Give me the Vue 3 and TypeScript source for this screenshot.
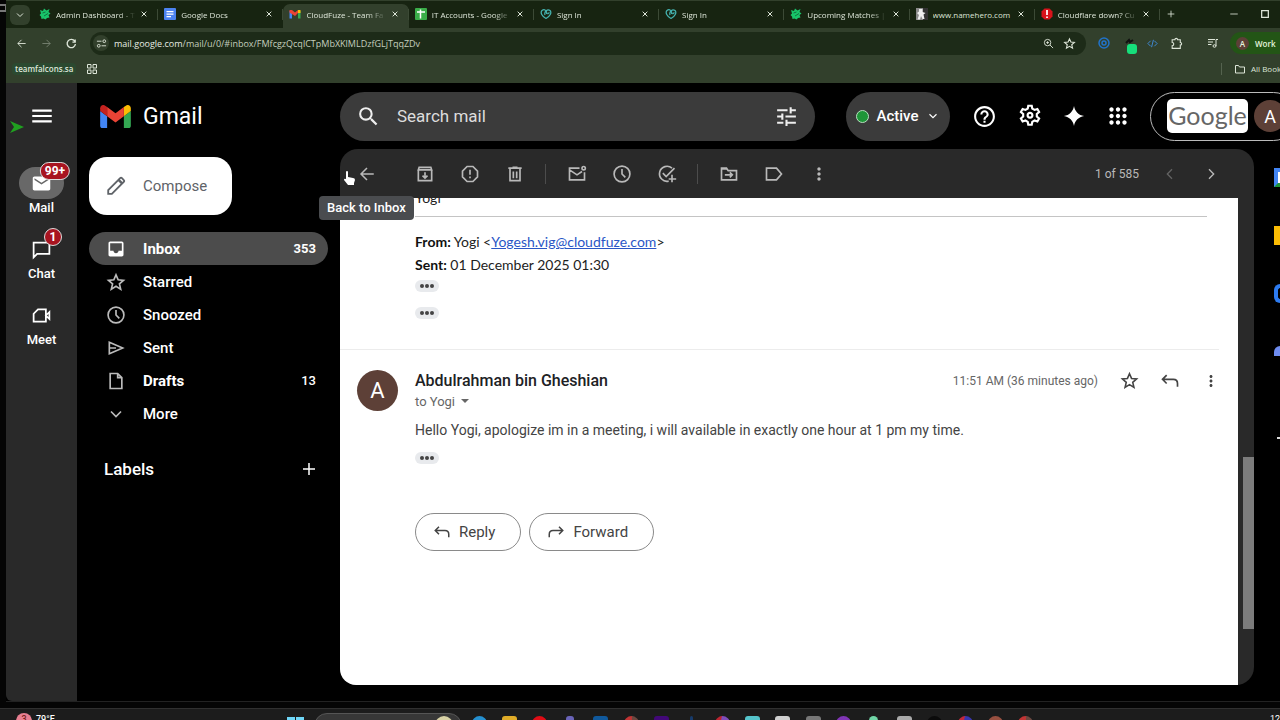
<script setup lang="ts">
import { h, ref } from 'vue'

interface Glyph { d: string; line?: number; box?: number }

const glyphs: Record<string, Glyph> = {
  chevron: { d: 'M6 9l6 6 6-6', line: 2 },
  prev: { d: 'M15 5l-7 7 7 7', line: 2 },
  next: { d: 'M9 5l7 7-7 7', line: 2 },
  close: { d: 'M5 5l14 14M19 5L5 19', line: 3 },
  plus: { d: 'M12 4v16M4 12h16', line: 2 },
  minus: { d: 'M3 12h18', line: 2 },
  square: { d: 'M4 4h16v16H4z', line: 3 },
  back: { d: 'M21 12H4M12 4l-8 8 8 8', line: 2 },
  forward: { d: 'M3 12h17M12 4l8 8-8 8', line: 2 },
  reload: { d: 'M19 7a9 9 0 1 0 1.5 6M20 3v6h-6', line: 3 },
  site: { d: 'M2 7h10M22 17H12M15 7a3 3 0 1 0 6 0 3 3 0 1 0-6 0M3 17a3 3 0 1 0 6 0 3 3 0 1 0-6 0', line: 2 },
  grid: { d: 'M3 3h7v7H3zM14 3h7v7h-7zM3 14h7v7H3zM14 14h7v7h-7z', line: 2 },
  zoomIn: { d: 'M3 10a7 7 0 1 0 14 0 7 7 0 1 0-14 0M15 15l7 7M10 7v6M7 10h6', line: 2 },
  star: { d: 'M12 3.500l2.600 5.900 6.400.600-4.900 4.300 1.500 6.300-5.600-3.400-5.600 3.400 1.500-6.300L3 10l6.400-.600z', line: 2 },
  puzzle: { d: 'M4 5h5a2.500 2.500 0 0 1 5 0h5v5a2.500 2.500 0 0 1 0 5v6H4v-5a3 3 0 0 0 0-6z', line: 2 },
  queue: { d: 'M2 5h14M2 10h10M2 15h7M18 18V5h4M12 18a3 2.500 0 1 0 6 0 3 2.500 0 1 0-6 0', line: 2 },
  folder: { d: 'M3 5h6l2 3h10v12H3z', line: 2 },
  menu: { d: 'M3 18h18v-2H3v2zm0-5h18v-2H3v2zm0-7v2h18V6H3z' },
  search: { d: 'M15.500 14h-.790l-.280-.270A6.471 6.471 0 0 0 16 9.500 6.500 6.500 0 1 0 9.500 16c1.610 0 3.090-.590 4.230-1.570l.270.280v.790l5 4.990L20.490 19l-4.990-5zm-6 0C7.010 14 5 11.990 5 9.500S7.010 5 9.500 5 14 7.010 14 9.500 11.990 14 9.500 14z' },
  tune: { d: 'M3 17v2h6v-2H3zM3 5v2h10V5H3zm10 16v-2h8v-2h-8v-2h-2v6h2zM7 9v2H3v2h4v2h2V9H7zm14 4v-2H11v2h10zm-6-4h2V7h4V5h-4V3h-2v6z' },
  help: { d: 'M11 18h2v-2h-2v2zm1-16C6.480 2 2 6.480 2 12s4.480 10 10 10 10-4.480 10-10S17.520 2 12 2zm0 18c-4.410 0-8-3.590-8-8s3.590-8 8-8 8 3.590 8 8-3.590 8-8 8zm0-14c-2.210 0-4 1.790-4 4h2c0-1.100.9-2 2-2s2 .9 2 2c0 2-3 1.750-3 5h2c0-2.250 3-2.500 3-5 0-2.210-1.790-4-4-4z' },
  gear: { d: 'M10.400 2.500h3.200l.5 2.700 2.100 1.200 2.600-.9 1.600 2.800-2.100 1.800v2.400l2.100 1.800-1.600 2.800-2.600-.9-2.100 1.200-.5 2.700h-3.200l-.5-2.700-2.100-1.200-2.600.9-1.600-2.800 2.100-1.800v-2.400L3.600 8.300l1.600-2.800 2.600.9 2.100-1.200zM9.800 11.300a2.200 2.200 0 1 0 4.400 0 2.200 2.200 0 1 0-4.400 0', line: 2 },
  spark: { d: 'M12 1c1 6 5 10 11 11-6 1-10 5-11 11-1-6-5-10-11-11 6-1 10-5 11-11z' },
  apps: { d: 'M6 8c1.100 0 2-.9 2-2s-.9-2-2-2-2 .9-2 2 .9 2 2 2zm6 12c1.100 0 2-.9 2-2s-.9-2-2-2-2 .9-2 2 .9 2 2 2zm-6 0c1.100 0 2-.9 2-2s-.9-2-2-2-2 .9-2 2 .9 2 2 2zm0-6c1.100 0 2-.9 2-2s-.9-2-2-2-2 .9-2 2 .9 2 2 2zm6 0c1.100 0 2-.9 2-2s-.9-2-2-2-2 .9-2 2 .9 2 2 2zm4-8c0 1.100.9 2 2 2s2-.9 2-2-.9-2-2-2-2 .9-2 2zm-4 2c1.100 0 2-.9 2-2s-.9-2-2-2-2 .9-2 2 .9 2 2 2zm6 6c1.100 0 2-.9 2-2s-.9-2-2-2-2 .9-2 2 .9 2 2 2zm0 6c1.100 0 2-.9 2-2s-.9-2-2-2-2 .9-2 2 .9 2 2 2z' },
  archive: { d: 'M4 7v13h16V7M4 7l1-3h14l1 3zM12 10v7M9 14l3 3 3-3', line: 2 },
  spam: { d: 'M8.500 3h7L21 8.500v7L15.500 21h-7L3 15.500v-7zM12 7v6M12 15v2', line: 2 },
  trash: { d: 'M6 6v14h12V6M4 5h16M9 4h6M10 9v8M14 9v8', line: 2 },
  unread: { d: 'M15 5H3v14h18V10M3 7l9 6 6-4M18 5a2 2 0 1 0 4 0 2 2 0 1 0-4 0', line: 2 },
  clock: { d: 'M2.500 12a9.500 9.500 0 1 0 19 0 9.500 9.500 0 1 0-19 0M12 6v6l4 4', line: 2 },
  task: { d: 'M18 5a9 9 0 1 0-4 15.500M7 11l4 4L21 5M18 13v9M14 18h9', line: 2 },
  moveTo: { d: 'M3 5h6l2 3h10v11H3zM3 6h7M7 13h9M13 10l3 3-3 3', line: 2 },
  label: { d: 'M3 5h12l6 7-6 7H3z', line: 2 },
  more: { d: 'M12 8c1.100 0 2-.9 2-2s-.9-2-2-2-2 .9-2 2 .9 2 2 2zm0 2c-1.100 0-2 .9-2 2s.9 2 2 2 2-.9 2-2-.9-2-2-2zm0 6c-1.100 0-2 .9-2 2s.9 2 2 2 2-.9 2-2-.9-2-2-2z' },
  reply: { d: 'M8 5l-5 5 5 5M3 10h13q5 0 5 5v4', line: 2 },
  send: { d: 'M16 5l5 5-5 5M21 10H8q-5 0-5 5v4', line: 2 },
  pencil: { d: 'M3.500 20.500v-4L15 5l4 4L7.500 20.500zM14.500 5.500l2-2q1-1 2 0l2 2q1 1 0 2l-2 2z', line: 2 },
  mail: { d: 'M20 4H4c-1.100 0-2 .9-2 2v12c0 1.100.9 2 2 2h16c1.100 0 2-.9 2-2V6c0-1.100-.9-2-2-2zm0 4l-8 5-8-5V6l8 5 8-5v2z' },
  chat: { d: 'M3 21V4h18v13H7z', line: 2 },
  meet: { d: 'M8 5h9v14H3V10zM17 12l4-4v8z', line: 2 },
  inbox: { d: 'M19 3H5c-1.100 0-2 .9-2 2v14c0 1.100.9 2 2 2h14c1.100 0 2-.9 2-2V5c0-1.100-.9-2-2-2zm0 11h-4c0 1.660-1.350 3-3 3s-3-1.340-3-3H5V5h14z' },
  sent: { d: 'M4 5l16 7-16 7zM4 12h8', line: 2 },
  draft: { d: 'M5 3h9l5 5v13H5zM14 3v5h5', line: 2 },
  caret: { d: 'M4 8h16l-8 8z' },
  code: { d: 'M8 6l-6 6 6 6M16 6l6 6-6 6M14 4l-4 16', line: 2 },
}

const Icon = (props: { name: string; size?: number }) => {
  const g = glyphs[props.name]
  const s = props.size ?? 20
  return h('svg', { width: s, height: s, viewBox: '0 0 24 24', 'aria-hidden': 'true' }, [
    g.line
      ? h('path', { d: g.d, fill: 'none', stroke: 'currentColor', 'stroke-width': g.line })
      : h('path', { d: g.d, fill: 'currentColor' }),
  ])
}
Icon.props = ['name', 'size']

const tabs = [
  { icon: 'falcon', title: 'Admin Dashboard - T' },
  { icon: 'docs', title: 'Google Docs' },
  { icon: 'gmail', title: 'CloudFuze - Team Fa', active: true },
  { icon: 'sheets', title: 'IT Accounts - Google' },
  { icon: 'daddy', title: 'Sign In' },
  { icon: 'daddy', title: 'Sign In' },
  { icon: 'falcon', title: 'Upcoming Matches |' },
  { icon: 'hero', title: 'www.namehero.com' },
  { icon: 'alert', title: 'Cloudflare down? Cu' },
]

const apps = [
  { icon: 'mail', name: 'Mail', badge: '99+', on: true },
  { icon: 'chat', name: 'Chat', badge: '1' },
  { icon: 'meet', name: 'Meet' },
]

const folders = [
  { icon: 'inbox', name: 'Inbox', count: '353', strong: true, on: true },
  { icon: 'star', name: 'Starred' },
  { icon: 'clock', name: 'Snoozed' },
  { icon: 'sent', name: 'Sent' },
  { icon: 'draft', name: 'Drafts', count: '13', strong: true },
  { icon: 'chevron', name: 'More' },
]

const actionGroups = [
  [['archive', 'Archive'], ['spam', 'Report spam'], ['trash', 'Delete']],
  [['unread', 'Mark as unread'], ['clock', 'Snooze'], ['task', 'Add to Tasks']],
  [['moveTo', 'Move to'], ['label', 'Labels'], ['more', 'More actions']],
]

const pinned = [
  'edge', 'files', 'chrome', 'teams', 'blue', 'person', 'purple', 'dot', 'it', 'cyan',
  'white', 'grey', 'violet', 'multi', 'silver', 'black', 'star-blue', 'brown', 'person',
]

const query = ref('')
</script>

<template>
  <div class="desktop">
    <i class="desk-icon"></i>
    <div class="window">
      <nav class="tabstrip" aria-label="Tabs">
        <button class="tab-search" aria-label="Search tabs"><Icon name="chevron" :size="12" /></button>
        <div class="tabs">
          <div v-for="(t, i) in tabs" :key="i" class="tab" :class="{ active: t.active }">
            <svg class="fav" viewBox="0 0 24 24" aria-hidden="true">
              <g v-if="t.icon === 'falcon'" fill="#19c46a">
                <path d="M2 4l6 2 2-5 5 4 6-3-2 6 4 3-4 3 2 5-5 1-3 3-4-2-4 1-1-5-3-3 3-3z" />
                <path d="M7 10l6-2M10 16l8-5" stroke="#0b5530" stroke-width="1.500" />
              </g>
              <g v-else-if="t.icon === 'docs'">
                <rect width="24" height="24" rx="2" fill="#4c83f0" />
                <path d="M5 7h14M5 12h14M5 17h9" stroke="#fff" stroke-width="2.500" />
              </g>
              <g v-else-if="t.icon === 'gmail'">
                <path fill="#4285f4" d="M1 6h5v15H1z" /><path fill="#34a853" d="M18 6h5v15h-5z" />
                <path fill="#fbbc04" d="M18 4h5v6h-5z" /><path fill="#ea4335" d="M1 4h5l6 5 6-5v6l-6 6L1 9z" />
              </g>
              <g v-else-if="t.icon === 'sheets'">
                <rect width="24" height="24" rx="2" fill="#3aae49" />
                <path d="M4 8h16M11 3v18" stroke="#fff" stroke-width="3" />
              </g>
              <g v-else-if="t.icon === 'daddy'" fill="none" stroke="#45b3b0" stroke-width="2.500">
                <path d="M12 21C4 17 0 9 4 5c5-4 11 1 9 7M12 21c8-4 12-12 8-16-5-4-12 2-10 9M15 12l4-3" />
              </g>
              <g v-else-if="t.icon === 'hero'">
                <rect width="24" height="24" fill="#8a8a8a" /><path d="M14 0h10v24H14z" fill="#333" />
                <path d="M6 2h7v6l6 2-4 3 2 9h-4l-3-6-2 7H3l3-9-4-4 4-3z" fill="#eee" />
              </g>
              <g v-else>
                <path d="M7 1h10l6 6v10l-6 6H7l-6-6V7z" fill="#d8131b" /><path d="M12 4v10M12 17v3" stroke="#fff" stroke-width="3.500" />
              </g>
            </svg>
            <span class="tab-title">{{ t.title }}</span>
            <button class="tab-close" aria-label="Close tab"><Icon name="close" :size="8" /></button>
          </div>
        </div>
        <div class="win-controls">
          <button aria-label="New tab"><Icon name="plus" :size="10" /></button>
          <span class="grow"></span>
          <button aria-label="Minimize"><Icon name="minus" :size="10" /></button>
          <button aria-label="Maximize"><Icon name="square" :size="10" /></button>
        </div>
      </nav>

      <div class="addressbar">
        <div class="nav-buttons">
          <button aria-label="Back"><Icon name="back" :size="11" /></button>
          <button aria-label="Forward" disabled><Icon name="forward" :size="11" /></button>
          <button aria-label="Reload"><Icon name="reload" :size="11" /></button>
        </div>
        <div class="omnibox">
          <button class="site" aria-label="Site information"><Icon name="site" :size="11" /></button>
          <span class="url"><b>mail.google.com</b>/mail/u/0/#inbox/FMfcgzQcqlCTpMbXKlMLDzfGLjTqqZDv</span>
          <button aria-label="Zoom"><Icon name="zoomIn" :size="11" /></button>
          <button aria-label="Bookmark"><Icon name="star" :size="13" /></button>
        </div>
        <div class="extensions">
          <button aria-label="Target extension">
            <svg width="12" height="12" viewBox="0 0 24 24"><g fill="none" stroke="#2173c9" stroke-width="3"><circle cx="12" cy="12" r="10" /><circle cx="12" cy="12" r="4" /></g></svg>
          </button>
          <button class="status-ext" aria-label="Status extension">
            <svg width="14" height="18" viewBox="0 0 14 18"><path d="M2 6l3-3 1 2 3-2" fill="none" stroke="#111" stroke-width="2" /><rect x="3" y="7" width="10" height="10" rx="3" fill="#16df7b" /></svg>
          </button>
          <button class="code" aria-label="Code extension"><Icon name="code" :size="11" /></button>
          <button aria-label="Extensions"><Icon name="puzzle" :size="13" /></button>
          <i class="bar-line"></i>
          <button aria-label="Media"><Icon name="queue" :size="12" /></button>
          <button class="profile"><span>A</span>Work</button>
        </div>
      </div>

      <div class="bookmarks">
        <a href="#" class="chip">teamfalcons.sa</a>
        <button aria-label="Apps"><Icon name="grid" :size="12" /></button>
        <span class="grow"></span>
        <a href="#" class="all"><Icon name="folder" :size="12" />All Book</a>
      </div>

      <div class="gmail">
        <aside class="rail">
          <button class="menu" aria-label="Main menu"><Icon name="menu" :size="26" /></button>
          <a v-for="a in apps" :key="a.name" href="#" class="app" :class="{ on: a.on }">
            <span class="app-icon"><Icon :name="a.icon" :size="21" /><em v-if="a.badge">{{ a.badge }}</em></span>
            {{ a.name }}
          </a>
          <svg class="marker" width="14" height="12" viewBox="0 0 14 12" aria-hidden="true"><path d="M0 0l14 6-14 6 4-6z" fill="#20a020" /></svg>
        </aside>

        <div class="client">
          <header class="head">
            <a href="#" class="brand">
              <svg width="31" height="23" viewBox="52 42 88 66" aria-hidden="true">
                <path fill="#4285f4" d="M58 108h14V74L52 59v43c0 3.320 2.690 6 6 6" />
                <path fill="#34a853" d="M120 108h14c3.320 0 6-2.690 6-6V59l-20 15" />
                <path fill="#fbbc04" d="M120 48v26l20-15v-8c0-7.420-8.470-11.650-14.400-7.200" />
                <path fill="#ea4335" d="M72 74V48l24 18 24-18v26L96 92" />
                <path fill="#c5221f" d="M52 51v8l20 15V48l-5.600-4.200c-5.940-4.450-14.400-.220-14.400 7.200" />
              </svg>
              Gmail
            </a>
            <form class="search" @submit.prevent>
              <button aria-label="Search"><Icon name="search" :size="25" /></button>
              <input v-model="query" type="text" placeholder="Search mail" aria-label="Search mail" />
              <button aria-label="Search options"><Icon name="tune" :size="25" /></button>
            </form>
            <div class="tools">
              <button class="status"><i></i>Active<Icon name="chevron" :size="14" /></button>
              <button aria-label="Support"><Icon name="help" :size="25" /></button>
              <button aria-label="Settings"><Icon name="gear" :size="26" /></button>
              <button aria-label="Gemini"><Icon name="spark" :size="22" /></button>
              <button aria-label="Google apps"><Icon name="apps" :size="26" /></button>
              <button class="account"><span class="google">Google</span><span class="avatar small">A</span></button>
            </div>
          </header>

          <div class="body">
            <nav class="side">
              <button class="compose"><Icon name="pencil" :size="22" />Compose</button>
              <a v-for="f in folders" :key="f.name" href="#" class="folder" :class="{ on: f.on, strong: f.strong }">
                <Icon :name="f.icon" :size="20" /><span>{{ f.name }}</span><small v-if="f.count">{{ f.count }}</small>
              </a>
              <div class="labels"><h2>Labels</h2><button aria-label="Create label"><Icon name="plus" :size="18" /></button></div>
            </nav>

            <main class="panel">
              <div class="toolbar">
                <button class="to-inbox" aria-label="Back to Inbox"><Icon name="back" :size="18" /></button>
                <div v-for="(g, i) in actionGroups" :key="i" class="group">
                  <button v-for="a in g" :key="a[0]" :aria-label="a[1]"><Icon :name="a[0]" :size="20" /></button>
                </div>
                <span class="grow"></span>
                <span class="pager">1 of 585</span>
                <button aria-label="Newer" disabled><Icon name="prev" :size="16" /></button>
                <button aria-label="Older"><Icon name="next" :size="16" /></button>
                <div class="tooltip" role="tooltip">Back to Inbox</div>
                <svg class="hand" width="13" height="18" viewBox="0 0 13 18" aria-hidden="true">
                  <path d="M3 10V3q0-1 1-1t1 1v5l5 1q2 0 2 2l-1 3v2H5l-4-5q0-2 2-1z" fill="#fff" />
                </svg>
              </div>

              <div class="scroller">
                <div class="thread">
                  <section class="quoted">
                    <p class="signature">Yogi</p>
                    <hr />
                    <p><b>From:</b> Yogi &lt;<a href="#">Yogesh.vig@cloudfuze.com</a>&gt;</p>
                    <p><b>Sent:</b> 01 December 2025 01:30</p>
                    <button class="dots" aria-label="Show trimmed content"><i></i><i></i><i></i></button>
                    <button class="dots" aria-label="Show trimmed content"><i></i><i></i><i></i></button>
                  </section>
                  <article class="message">
                    <span class="avatar">A</span>
                    <div class="content">
                      <div class="meta">
                        <h3>Abdulrahman bin Gheshian</h3>
                        <time>11:51 AM (36 minutes ago)</time>
                        <button aria-label="Star"><Icon name="star" :size="19" /></button>
                        <button aria-label="Reply"><Icon name="reply" :size="20" /></button>
                        <button aria-label="More"><Icon name="more" :size="18" /></button>
                      </div>
                      <button class="to">to Yogi <Icon name="caret" :size="12" /></button>
                      <p class="text">Hello Yogi, apologize im in a meeting, i will available in exactly one hour at 1 pm my time.</p>
                      <button class="dots" aria-label="Show trimmed content"><i></i><i></i><i></i></button>
                      <div class="answers">
                        <button><Icon name="reply" :size="18" />Reply</button>
                        <button><Icon name="send" :size="18" />Forward</button>
                      </div>
                    </div>
                  </article>
                </div>
                <div class="track"><i></i></div>
              </div>
            </main>

            <aside class="addons">
              <i class="calendar"></i><i class="keep"></i><i class="tasks"></i><i class="contacts"></i><i class="add"></i>
            </aside>
          </div>
        </div>
      </div>
    </div>

    <footer class="taskbar">
      <div class="weather"><i>3</i>79°F</div>
      <svg class="start" width="17" height="17" viewBox="0 0 17 17" aria-hidden="true"><path d="M0 0h8v8H0zM9 0h8v8H9z" fill="#6fd6f7" /></svg>
      <div class="task-search"><i></i></div>
      <div class="pins"><span v-for="(p, i) in pinned" :key="i" :class="p"><i></i></span></div>
      <span class="grow"></span>
      <span class="time">12</span>
    </footer>
  </div>
</template>

<style>
html, body { background: #050505; overflow: hidden; }
</style>

<style scoped>
* { box-sizing: border-box; }
.desktop { position: relative; display: flex; flex-direction: column; height: 100vh; overflow: hidden; background: #050505; color: #fff; font-family: Roboto, "Liberation Sans", sans-serif; }
.desk-icon { position: absolute; left: 0; top: 4px; width: 7px; height: 8px; border: 2px solid #777; border-left: 0; }
button { display: inline-flex; align-items: center; justify-content: center; flex: none; padding: 0; border: 0; background: none; color: inherit; font: inherit; }
a { color: inherit; text-decoration: none; }
svg { flex: none; display: block; }
h2, h3, p { margin: 0; font-weight: 400; }
.grow { flex: 1; }

.window { position: relative; display: flex; flex-direction: column; flex: 1; min-height: 0; margin-left: 6px; margin-bottom: 6px; background: #32402c; border-bottom: 1px solid #222; overflow: hidden; }
.tabstrip, .addressbar, .bookmarks { display: flex; align-items: center; flex: none; font-family: "Open Sans", "Noto Sans", sans-serif; font-size: 9px; color: #dde5d8; }
.tabstrip { height: 28px; padding-left: 4px; background: #172411; border-top: 1px solid #32402c; font-size: 8px; font-weight: 500; }
.tab-search { width: 20px; height: 20px; margin-right: 3px; border-radius: 6px; background: #32402c; }
.tabs { display: flex; flex: 1; min-width: 0; height: 100%; padding-top: 3px; }
.tab { position: relative; display: flex; align-items: center; flex: 1; min-width: 0; padding: 0 8px 4px 6px; }
.tab::after { content: ""; position: absolute; right: 0; top: 5px; width: 1px; height: 11px; background: #3c4a36; }
.tab.active { background: #32402c; border-radius: 7px 7px 0 0; }
.fav { width: 12px; height: 12px; margin-right: 5px; }
.tab-title { flex: 1; overflow: hidden; white-space: nowrap; mask-image: linear-gradient(to right, #000 62px, transparent 80px); }
.tab:nth-child(8) .tab-title { mask-image: none; }
.tab-close { width: 12px; height: 12px; margin-left: 2px; }
.win-controls { display: flex; align-items: center; flex: none; width: 120px; padding: 0 10px 2px 6px; }
.win-controls button { width: 10px; }
.win-controls button + button { margin-left: 21px; }
.addressbar { height: 30px; }
.nav-buttons { display: flex; width: 84px; padding-left: 10px; gap: 14px; }
button:disabled { opacity: 0.400; }
.omnibox { display: flex; align-items: center; flex: 1; height: 23px; padding: 0 10px 0 3px; gap: 9px; border-radius: 12px; background: #1d2b18; }
.site { width: 16px; height: 16px; border-radius: 8px; background: #32402c; margin-right: -4px; }
.url { flex: 1; color: #c4cebe; }
.url b { color: #e6ece2; font-weight: 500; }
.extensions { display: flex; align-items: center; width: 194px; padding-left: 12px; gap: 12px; }
.status-ext { margin-left: 2px; margin-right: -3px; padding-top: 6px; }
.code { color: #3f8fe0; }
.bar-line { width: 1px; height: 11px; background: #55634f; }
.profile { width: 64px; height: 22px; margin-left: -1px; padding-left: 6px; justify-content: flex-start; gap: 6px; border-radius: 11px 0 0 11px; background: #235516; color: #e4f5dd; font-size: 8px; font-weight: 600; }
.profile span { width: 13px; height: 13px; border-radius: 7px; background: #5d4037; font-size: 8px; line-height: 13px; text-align: center; }
.bookmarks { height: 25px; padding: 0 0 4px 6px; gap: 10px; }
.chip { padding: 0 3px; border-radius: 4px; background: #2b4930; font-size: 8px; font-weight: 600; line-height: 12px; }
.all { display: flex; align-items: center; width: 59px; padding-left: 12px; gap: 5px; border-left: 1px solid #55634f; font-size: 8px; white-space: nowrap; }

.gmail { display: flex; flex: 1; min-height: 0; background: #000; }
.rail { position: relative; display: flex; flex-direction: column; align-items: center; flex: none; width: 71px; background: #292929; border-bottom-left-radius: 6px; }
.menu { height: 66px; }
.app { display: flex; flex-direction: column; align-items: center; height: 66px; gap: 1px; font-size: 13px; line-height: 16px; font-weight: 500; }
.app-icon { position: relative; display: flex; align-items: center; justify-content: center; width: 45px; height: 32px; border-radius: 16px; }
.menu + .app { margin-top: 18px; }
.on .app-icon { background: #686868; }
.app em { position: absolute; left: 34px; top: -5px; min-width: 18px; height: 18px; padding: 0 4px; transform: translateX(-50%); border: 1px solid #ddd; border-radius: 9px; background: #a81420; font-size: 12px; font-weight: 700; font-style: normal; line-height: 16px; text-align: center; }
.on em { left: 36px; }
.marker { position: absolute; left: 4px; top: 38px; }
.client { display: flex; flex-direction: column; flex: 1; min-width: 0; }
.head { display: flex; align-items: center; flex: none; height: 66px; }
.brand { display: flex; align-items: center; flex: none; width: 263px; padding-left: 23px; gap: 12px; font-size: 23px; }
.search { display: flex; align-items: center; flex: 1; min-width: 0; height: 49px; padding: 0 16px; gap: 16px; border-radius: 25px; background: #3b3b3b; color: #eee; }
.search input { flex: 1; min-width: 0; padding: 0; border: 0; outline: 0; background: none; color: #eee; font: 17px Roboto, sans-serif; }
.search input::placeholder { color: #ddd; opacity: 1; }
.tools { display: flex; align-items: center; flex: none; width: 465px; padding-left: 31px; gap: 20px; overflow: hidden; }
.status { width: 104px; height: 49px; margin-right: 2px; gap: 8px; border-radius: 25px; background: #3b3b3b; font-size: 15px; font-weight: 500; }
.status i { width: 13px; height: 13px; border: 1px solid #b7dfc0; border-radius: 7px; background: #1e9638; }
.account { width: 148px; height: 49px; margin-left: -1px; padding-left: 16px; justify-content: flex-start; gap: 6px; border: 1px solid #bbb; border-radius: 25px; }
.google { width: 81px; height: 34px; border-radius: 5px; background: #fff; color: #666; font: 25px/32px Lato, sans-serif; text-align: center; }
.avatar { display: flex; align-items: center; justify-content: center; flex: none; width: 41px; height: 41px; border-radius: 50%; background: #5d4037; color: #fff; font-size: 22px; }
.avatar.small { width: 32px; height: 32px; font-size: 18px; }

.body { display: flex; flex: 1; min-height: 0; padding-bottom: 16px; }
.side { flex: none; width: 263px; padding: 8px 12px 0; }
.compose { width: 143px; height: 58px; margin-bottom: 17px; padding-left: 16px; justify-content: flex-start; gap: 16px; border-radius: 18px; background: #fff; color: #5f6368; font-size: 15px; }
.folder { display: flex; align-items: center; height: 33px; padding: 0 12px 0 17px; gap: 17px; border-radius: 17px; font-size: 15px; font-weight: 500; }
.folder svg { color: #bbb; }
.folder span { flex: 1; }
.folder small { font-size: 13px; }
.folder.strong { font-weight: 700; }
.folder.strong:not(.on) small { font-weight: 500; }
.folder.on { background: #4c4c4c; }
.folder.on svg { color: #fff; }
.labels { display: flex; align-items: center; justify-content: space-between; height: 32px; margin-top: 23px; padding: 0 10px 0 15px; }
.labels h2 { font-size: 17px; font-weight: 500; }

.panel { display: flex; flex-direction: column; flex: 1; min-width: 0; border-radius: 18px; background: #292929; }
.toolbar { position: relative; display: flex; align-items: center; flex: none; height: 49px; padding-right: 30px; color: #b9b9b9; }
.to-inbox { width: 54px; margin-right: 8px; }
.group { display: flex; }
.group button { width: 45px; }
.group + .group { margin-left: 8px; padding-left: 8px; border-left: 1px solid #4c4c4c; }
.toolbar > button:not(.to-inbox) { width: 26px; margin-left: 15px; }
.pager { margin-right: 3px; font-size: 12px; }
.tooltip { position: absolute; left: -21px; top: 47px; padding: 0 8px; border-radius: 4px; background: #4a4c4f; color: #fff; font-size: 13px; font-weight: 500; line-height: 24px; white-space: nowrap; z-index: 2; }
.hand { position: absolute; left: 3px; top: 20px; }
.scroller { display: flex; flex: 1; min-height: 0; }
.thread { flex: 1; min-width: 0; overflow: hidden; border-bottom-left-radius: 16px; background: #fff; color: #222; }
.track { flex: none; width: 16px; padding: 259px 0 0 5px; }
.track i { display: block; width: 11px; height: 172px; background: #7c7c7c; }
.quoted { display: flex; flex-direction: column; align-items: flex-start; margin-right: 19px; padding: 0 12px 30px 75px; border-bottom: 1px solid #ececec; font: 14px/23px Lato, sans-serif; }
.signature { margin-top: -12px; }
.quoted hr { width: 100%; height: 1px; margin: 7px 0 13px; border: 0; background: #c4c4c4; }
.quoted b { color: #111; }
.quoted a { color: #2a56c6; text-decoration: underline; }
.dots { display: flex; width: 24px; height: 12px; gap: 1px; border-radius: 6px; background: #e8eaed; }
.dots i { width: 4px; height: 4px; border-radius: 2px; background: #444; }
.quoted .dots { margin-top: 4px; }
.quoted .dots + .dots { margin-top: 15px; }
.message { display: flex; padding: 20px 18px 0 17px; gap: 17px; }
.content { flex: 1; min-width: 0; }
.meta { display: flex; align-items: center; height: 21px; color: #444; }
.meta h3 { flex: 1; color: #202124; font-size: 16px; font-weight: 500; }
.meta time { margin-right: 22px; color: #666; font-size: 12px; }
.meta button { width: 18px; }
.meta button + button { margin-left: 23px; }
.to { display: flex; height: 20px; gap: 4px; color: #666; font-size: 13px; }
.text { margin: 9px 0 12px; color: #444; font-size: 14px; line-height: 20px; }
.answers { display: flex; gap: 8px; margin-top: 49px; }
.answers button { height: 38px; padding: 0 25px 0 17px; gap: 8px; border: 1px solid #8a8a8a; border-radius: 19px; color: #444; font-size: 15px; }
.addons { display: flex; flex-direction: column; align-items: flex-end; flex: none; width: 26px; padding-top: 19px; overflow: hidden; }
.addons i { flex: none; width: 6px; height: 19px; margin-bottom: 39px; }
.calendar { border: 4px solid #4285f4; border-right: 0; border-bottom-color: #1e9638; background: #fff; }
.keep { background: #fbbc04; }
.tasks { border: 4px solid #2d7bf0; border-right: 0; border-radius: 9px 0 0 9px; }
.contacts { margin-top: 4px; border-radius: 8px 0 0 0; background: linear-gradient(#6e8cf0 50%, transparent 50%); }
.addons .add { width: 3px; height: 2px; margin-top: 33px; background: #ddd; }

.taskbar { display: flex; align-items: flex-start; flex: none; height: 12px; overflow: hidden; border-top: 1px solid #303030; background: #1c1c1c; font-size: 9px; }
.weather { display: flex; width: 287px; padding: 4px 0 0 16px; gap: 4px; font-weight: 500; line-height: 12px; }
.weather i { width: 16px; height: 12px; border-radius: 8px 8px 0 0; background: #e87f91; color: #722; font-style: normal; text-align: center; }
.start { margin: 8px 10px 0 0; }
.task-search { width: 148px; height: 26px; margin: 4px 2px 0 0; padding-left: 120px; border: 1px solid #555; border-radius: 13px; background: #373737; }
.task-search i { display: block; width: 18px; height: 18px; margin-top: 2px; border-radius: 9px; background: #d8d2a5; }
.pins { display: grid; grid-template-columns: repeat(19, 1fr); width: 577px; }
.pins span { display: flex; justify-content: center; padding-top: 7px; }
.pins i { width: 15px; height: 15px; border-radius: 3px; background: #555; }
.pins .edge i { background: #2590d0; border-radius: 8px; }
.pins .files i { background: #e0ac28; }
.pins .chrome i { background: #e00c15; border-radius: 8px; }
.pins .teams i { width: 8px; background: #6a64b8; }
.pins .blue i { background: #10599c; }
.pins .person i { background: #c23434; border-radius: 8px; border-right: 7px solid #6b4840; }
.pins .purple i { background: #420878; }
.pins .dot i { width: 3px; background: #173b6b; }
.pins .it i { border-radius: 8px; background: #7d4dba; border-left: 6px solid #bb2430; }
.pins .cyan i { background: #55c4cb; }
.pins .white i { background: #d0d0d0; }
.pins .grey i { background: #777; }
.pins .violet i { background: #8035b5; border-radius: 8px; }
.pins .multi i { width: 9px; background: #70d5a6; border-radius: 5px; }
.pins .silver i { background: #aaa; }
.pins .black i { background: #0b0b0b; border-radius: 8px; }
.pins .star-blue i { background: #3836ae; border-left: 6px solid #c4273a; border-radius: 8px; }
.pins .brown i { background: #985040; border-radius: 8px; }
.time { width: 10px; padding-top: 5px; overflow: hidden; }
</style>
